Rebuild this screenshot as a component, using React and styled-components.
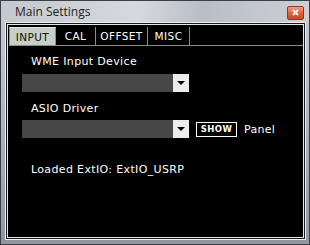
import React, { useState } from 'react';
import styled, { createGlobalStyle } from 'styled-components';

const GlobalStyle = createGlobalStyle`
  html, body {
    margin: 0;
    padding: 0;
    background: #000;
  }
`;

const Window = styled.div`
  width: 310px;
  height: 245px;
  box-sizing: border-box;
  display: flex;
  flex-direction: column;
  border: 1px solid #3a4048;
  background: linear-gradient(180deg, #c9cdd2 0%, #b4bac2 40%, #8e969f 100%);
  font-family: 'DejaVu Sans', Verdana, sans-serif;
`;

const TitleBar = styled.div`
  height: 21px;
  display: flex;
  align-items: center;
  justify-content: space-between;
  padding: 0 5px 0 14px;
  background: linear-gradient(100deg, #c4c9cf 0%, #d6d9dd 45%, #b9bec6 65%, #ccd0d5 100%);
`;

const Title = styled.span`
  font-family: 'Open Sans', 'Liberation Sans', sans-serif;
  font-size: 12px;
  color: #1e2126;
`;

const CloseButton = styled.div`
  width: 15px;
  height: 12px;
  margin-top: 2px;
  border: 1px solid #8a3a24;
  border-radius: 2px;
  background: linear-gradient(180deg, #f0a080 0%, #e2643e 50%, #c84a28 100%);
  display: flex;
  align-items: center;
  justify-content: center;
`;

const Frame = styled.div`
  flex: 1;
  margin: 0 3px 4px 4px;
  border: 1px solid #eef0f2;
  padding: 1px;
  background: #141820;
  display: flex;
`;

const Panel = styled.div`
  flex: 1;
  border: 1px solid #e4e6e8;
  background: #000;
  display: flex;
  flex-direction: column;
  padding: 2px 0 0 1px;
`;

const TabBar = styled.div`
  display: flex;
  height: 18px;
  border-bottom: 1px solid #8c8c8c;
`;

const Tab = styled.div`
  box-sizing: border-box;
  width: ${({ w }) => w}px;
  display: flex;
  align-items: center;
  justify-content: center;
  font-family: 'DejaVu Sans', Verdana, sans-serif;
  font-size: 10.5px;
  letter-spacing: 0.4px;
  color: ${({ active }) => (active ? '#101010' : '#ffffff')};
  background: ${({ active }) => (active ? '#c6d0c6' : '#000')};
  border-right: 1px solid #8c8c8c;
  border-left: ${({ first }) => (first ? '1px solid #8c8c8c' : 'none')};
  border-top: ${({ active }) => (active ? '1px solid #e0e6e0' : 'none')};
  cursor: pointer;
`;

const Content = styled.div`
  display: flex;
  flex-direction: column;
  padding: 9px 0 0 13px;
  color: #fff;
  font-size: 11px;
`;

const Label = styled.div`
  padding-left: ${({ indent }) => indent || 9}px;
  margin-bottom: ${({ gap }) => gap}px;
  line-height: 13px;
  letter-spacing: 0.35px;
`;

const Row = styled.div`
  display: flex;
  align-items: center;
  margin-bottom: ${({ gap }) => gap}px;
`;

const Select = styled.div`
  width: 167px;
  height: 18px;
  display: flex;
  justify-content: flex-end;
  background: #474747;
`;

const Arrow = styled.div`
  width: 16px;
  height: 18px;
  background: #ececec;
  display: flex;
  align-items: center;
  justify-content: center;
`;

const ShowButton = styled.div`
  margin-left: 7px;
  width: 39px;
  height: 13px;
  border: 1px solid #fff;
  display: flex;
  align-items: center;
  justify-content: center;
  font-size: 8.5px;
  font-weight: bold;
  letter-spacing: 0.4px;
`;

const PanelText = styled.span`
  margin-left: 7px;
  font-size: 11px;
  letter-spacing: 0.3px;
`;

const DropDown = () => (
  <Select>
    <Arrow>
      <svg width="8" height="4" viewBox="0 0 8 4">
        <polygon points="0,0 8,0 4,4" fill="#000" />
      </svg>
    </Arrow>
  </Select>
);

const tabs = [
  { name: 'INPUT', w: 47 },
  { name: 'CAL', w: 40 },
  { name: 'OFFSET', w: 52 },
  { name: 'MISC', w: 42 },
];

const App = () => {
  const [active, setActive] = useState('INPUT');

  return (
    <>
      <GlobalStyle />
      <Window>
        <TitleBar>
          <Title>Main Settings</Title>
          <CloseButton>
            <svg width="7" height="7" viewBox="0 0 7 7">
              <path d="M1 1 L6 6 M6 1 L1 6" stroke="#fff" strokeWidth="1.8" />
            </svg>
          </CloseButton>
        </TitleBar>
        <Frame>
          <Panel>
            <TabBar>
              {tabs.map((t, i) => (
                <Tab
                  key={t.name}
                  w={t.w}
                  first={i === 0}
                  active={active === t.name}
                  onClick={() => setActive(t.name)}
                >
                  {t.name}
                </Tab>
              ))}
            </TabBar>
            <Content>
              <Label gap={6}>WME Input Device</Label>
              <Row gap={10}>
                <DropDown />
              </Row>
              <Label gap={5}>ASIO Driver</Label>
              <Row gap={25}>
                <DropDown />
                <ShowButton>SHOW</ShowButton>
                <PanelText>Panel</PanelText>
              </Row>
              <Label>Loaded ExtIO: ExtIO_USRP</Label>
            </Content>
          </Panel>
        </Frame>
      </Window>
    </>
  );
};

export default App;
